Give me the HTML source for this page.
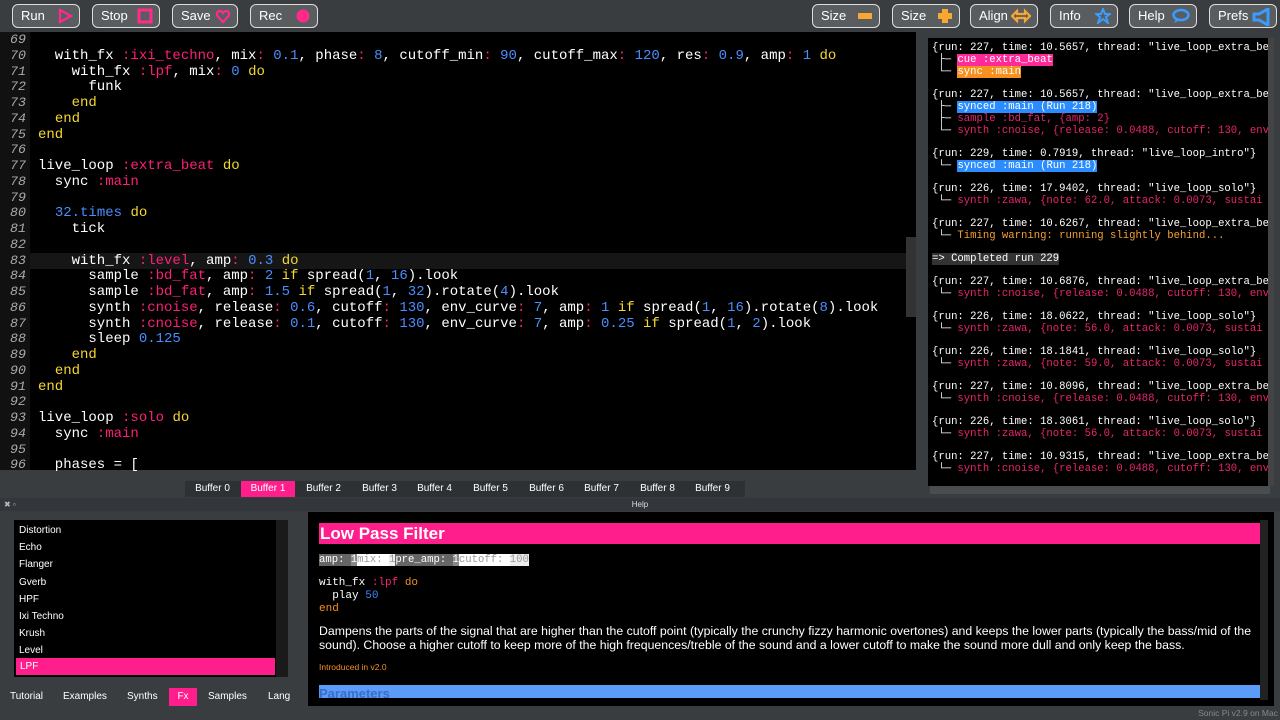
<!DOCTYPE html>
<html><head><meta charset="utf-8"><style>
*{margin:0;padding:0;box-sizing:border-box}
body{width:1280px;height:720px;background:#3a3d40;overflow:hidden;position:relative;font-family:"Liberation Sans",sans-serif}
.btn{position:absolute;top:4px;height:24px;border:1.5px solid #ddd;border-radius:6px;background:#5a5d60;color:#fff;font-size:13px;line-height:21px;padding-left:8px}
.btn i{position:absolute;right:6px;top:3px;line-height:0}
#ed{position:absolute;left:0;top:32px;width:916px;height:438px;background:#000;overflow:hidden}
#gut{position:absolute;left:0;top:0;width:30px;height:438px;background:#111}
.ln{position:absolute;left:0;width:26px;height:16px;font:italic 13.3px "Liberation Mono",monospace;color:#aaa;text-align:right}
.cl{position:absolute;left:38px;height:16px;font:14px "Liberation Mono",monospace;color:#fff;white-space:pre;line-height:16px}
.k{color:#f5d830}.s{color:#ff1e78}.n{color:#4a8dff}.c{color:#ff1e78}
#log{position:absolute;left:928px;top:38px;width:340px;height:448px;background:#000;overflow:hidden;font:10.6px "Liberation Mono",monospace;color:#fff;white-space:pre}
#log div{position:absolute;left:4px;line-height:12px}
.p{color:#e8246e}.o{color:#f7a030}
.tab{position:absolute;top:481px;height:16px;font-size:10px;color:#fff;line-height:16px;text-align:center}
</style></head><body>
<div class="btn" style="left:12px;width:68px">Run<i><svg width="16" height="16"><path d="M3 2 L14 8 L3 14Z" fill="none" stroke="#ff2a8a" stroke-width="2.2"/></svg></i></div>
<div class="btn" style="left:92px;width:68px">Stop<i><svg width="16" height="16"><rect x="2" y="2" width="12" height="12" fill="none" stroke="#ff2a8a" stroke-width="3"/></svg></i></div>
<div class="btn" style="left:172px;width:66px">Save<i><svg width="16" height="16"><path d="M8 14 L2.5 8 C0 4.5 5 0.5 8 5 C11 0.5 16 4.5 13.5 8Z" fill="none" stroke="#ff2a8a" stroke-width="2.2"/></svg></i></div>
<div class="btn" style="left:250px;width:68px">Rec<i><svg width="16" height="16"><circle cx="8" cy="8" r="6.5" fill="#ff2a8a"/></svg></i></div>

<div class="btn" style="left:812px;width:68px">Size<i><svg width="16" height="16"><rect x="1" y="5" width="14" height="6" fill="#f8a830"/></svg></i></div>
<div class="btn" style="left:892px;width:68px">Size<i><svg width="16" height="16"><path d="M5 1h6v4h4v6h-4v4H5v-4H1V5h4z" fill="#f8a830"/></svg></i></div>
<div class="btn" style="left:970px;width:68px">Align<i><svg width="20" height="16"><path d="M1 8 L6 3 V6 H14 V3 L19 8 L14 13 V10 H6 V13Z" fill="none" stroke="#f8a830" stroke-width="2.2"/></svg></i></div>
<div class="btn" style="left:1050px;width:68px">Info<i><svg width="16" height="16"><path d="M8 1 L10 6 H15 L11 9 L13 15 L8 11 L3 15 L5 9 L1 6 H6Z" fill="none" stroke="#3a9cff" stroke-width="2"/></svg></i></div>
<div class="btn" style="left:1129px;width:68px">Help<i><svg width="18" height="16"><ellipse cx="9" cy="7" rx="7.5" ry="5" fill="none" stroke="#3a9cff" stroke-width="2.5"/><path d="M4 11 L2 15 L8 12" fill="#3a9cff"/></svg></i></div>
<div class="btn" style="left:1209px;width:68px">Prefs<i><svg width="18" height="18"><path d="M2 6 H7 L16 1 V17 L7 12 H2Z" fill="none" stroke="#3a9cff" stroke-width="3"/></svg></i></div>

<div id="ed"><div id="gut"></div>
<div style="position:absolute;left:30px;top:221px;width:886px;height:16px;background:#161616"></div>
<div style="position:absolute;left:906px;top:205px;width:10px;height:80px;background:#333"></div>
</div>
<div id="code" style="position:absolute;left:0;top:32px">
<div class="ln" style="top:0">69</div><div class="ln" style="top:15.75px">70</div><div class="ln" style="top:31.5px">71</div><div class="ln" style="top:47.25px">72</div><div class="ln" style="top:63px">73</div><div class="ln" style="top:78.75px">74</div><div class="ln" style="top:94.5px">75</div><div class="ln" style="top:110.25px">76</div><div class="ln" style="top:126px">77</div><div class="ln" style="top:141.75px">78</div><div class="ln" style="top:157.5px">79</div><div class="ln" style="top:173.25px">80</div><div class="ln" style="top:189px">81</div><div class="ln" style="top:204.75px">82</div><div class="ln" style="top:220.5px">83</div><div class="ln" style="top:236.25px">84</div><div class="ln" style="top:252px">85</div><div class="ln" style="top:267.75px">86</div><div class="ln" style="top:283.5px">87</div><div class="ln" style="top:299.25px">88</div><div class="ln" style="top:315px">89</div><div class="ln" style="top:330.75px">90</div><div class="ln" style="top:346.5px">91</div><div class="ln" style="top:362.25px">92</div><div class="ln" style="top:378px">93</div><div class="ln" style="top:393.75px">94</div><div class="ln" style="top:409.5px">95</div><div class="ln" style="top:425.25px">96</div>
<div class="cl" style="top:15.75px">  with_fx <span class="s">:ixi_techno</span>, mix<span class="c">:</span> <span class="n">0.1</span>, phase<span class="c">:</span> <span class="n">8</span>, cutoff_min<span class="c">:</span> <span class="n">90</span>, cutoff_max<span class="c">:</span> <span class="n">120</span>, res<span class="c">:</span> <span class="n">0.9</span>, amp<span class="c">:</span> <span class="n">1</span> <span class="k">do</span></div>
<div class="cl" style="top:31.5px">    with_fx <span class="s">:lpf</span>, mix<span class="c">:</span> <span class="n">0</span> <span class="k">do</span></div>
<div class="cl" style="top:47.25px">      funk</div>
<div class="cl" style="top:63px">    <span class="k">end</span></div>
<div class="cl" style="top:78.75px">  <span class="k">end</span></div>
<div class="cl" style="top:94.5px"><span class="k">end</span></div>
<div class="cl" style="top:126px">live_loop <span class="s">:extra_beat</span> <span class="k">do</span></div>
<div class="cl" style="top:141.75px">  sync <span class="s">:main</span></div>
<div class="cl" style="top:173.25px">  <span class="n">32.times</span> <span class="k">do</span></div>
<div class="cl" style="top:189px">    tick</div>
<div class="cl" style="top:220.5px">    with_fx <span class="s">:level</span>, amp<span class="c">:</span> <span class="n">0.3</span> <span class="k">do</span></div>
<div class="cl" style="top:236.25px">      sample <span class="s">:bd_fat</span>, amp<span class="c">:</span> <span class="n">2</span> <span class="k">if</span> spread(<span class="n">1</span>, <span class="n">16</span>).look</div>
<div class="cl" style="top:252px">      sample <span class="s">:bd_fat</span>, amp<span class="c">:</span> <span class="n">1.5</span> <span class="k">if</span> spread(<span class="n">1</span>, <span class="n">32</span>).rotate(<span class="n">4</span>).look</div>
<div class="cl" style="top:267.75px">      synth <span class="s">:cnoise</span>, release<span class="c">:</span> <span class="n">0.6</span>, cutoff<span class="c">:</span> <span class="n">130</span>, env_curve<span class="c">:</span> <span class="n">7</span>, amp<span class="c">:</span> <span class="n">1</span> <span class="k">if</span> spread(<span class="n">1</span>, <span class="n">16</span>).rotate(<span class="n">8</span>).look</div>
<div class="cl" style="top:283.5px">      synth <span class="s">:cnoise</span>, release<span class="c">:</span> <span class="n">0.1</span>, cutoff<span class="c">:</span> <span class="n">130</span>, env_curve<span class="c">:</span> <span class="n">7</span>, amp<span class="c">:</span> <span class="n">0.25</span> <span class="k">if</span> spread(<span class="n">1</span>, <span class="n">2</span>).look</div>
<div class="cl" style="top:299.25px">      sleep <span class="n">0.125</span></div>
<div class="cl" style="top:315px">    <span class="k">end</span></div>
<div class="cl" style="top:330.75px">  <span class="k">end</span></div>
<div class="cl" style="top:346.5px"><span class="k">end</span></div>
<div class="cl" style="top:378px">live_loop <span class="s">:solo</span> <span class="k">do</span></div>
<div class="cl" style="top:393.75px">  sync <span class="s">:main</span></div>
<div class="cl" style="top:425.25px">  phases = [</div>
</div>

<div id="log">
<div style="top:4px">{run: 227, time: 10.5657, thread: "live_loop_extra_be</div>
<div style="top:16px"> ├─ <span style="background:#ff2a9a;color:#fff">cue :extra_beat</span></div>
<div style="top:28px"> └─ <span style="background:#f7901e;color:#fff">sync :main</span></div>
<div style="top:51px">{run: 227, time: 10.5657, thread: "live_loop_extra_be</div>
<div style="top:63px"> ├─ <span style="background:#2a8cff;color:#fff">synced :main (Run 218)</span></div>
<div style="top:75px" class="p"> <span style="color:#fff">├─</span> sample :bd_fat, {amp: 2}</div>
<div style="top:87px" class="p"> <span style="color:#fff">└─</span> synth :cnoise, {release: 0.0488, cutoff: 130, env</div>
<div style="top:110px">{run: 229, time: 0.7919, thread: "live_loop_intro"}</div>
<div style="top:122px"> └─ <span style="background:#2a8cff;color:#fff">synced :main (Run 218)</span></div>
<div style="top:145px">{run: 226, time: 17.9402, thread: "live_loop_solo"}</div>
<div style="top:157px" class="p"> <span style="color:#fff">└─</span> synth :zawa, {note: 62.0, attack: 0.0073, sustai</div>
<div style="top:180px">{run: 227, time: 10.6267, thread: "live_loop_extra_be</div>
<div style="top:192px" class="o"> <span style="color:#fff">└─</span> Timing warning: running slightly behind...</div>
<div style="top:215px"><span style="background:#333">=&gt; Completed run 229</span></div>
<div style="top:238px">{run: 227, time: 10.6876, thread: "live_loop_extra_be</div>
<div style="top:250px" class="p"> <span style="color:#fff">└─</span> synth :cnoise, {release: 0.0488, cutoff: 130, env</div>
<div style="top:273px">{run: 226, time: 18.0622, thread: "live_loop_solo"}</div>
<div style="top:285px" class="p"> <span style="color:#fff">└─</span> synth :zawa, {note: 56.0, attack: 0.0073, sustai</div>
<div style="top:308px">{run: 226, time: 18.1841, thread: "live_loop_solo"}</div>
<div style="top:320px" class="p"> <span style="color:#fff">└─</span> synth :zawa, {note: 59.0, attack: 0.0073, sustai</div>
<div style="top:343px">{run: 227, time: 10.8096, thread: "live_loop_extra_be</div>
<div style="top:355px" class="p"> <span style="color:#fff">└─</span> synth :cnoise, {release: 0.0488, cutoff: 130, env</div>
<div style="top:378px">{run: 226, time: 18.3061, thread: "live_loop_solo"}</div>
<div style="top:390px" class="p"> <span style="color:#fff">└─</span> synth :zawa, {note: 56.0, attack: 0.0073, sustai</div>
<div style="top:413px">{run: 227, time: 10.9315, thread: "live_loop_extra_be</div>
<div style="top:425px" class="p"> <span style="color:#fff">└─</span> synth :cnoise, {release: 0.0488, cutoff: 130, env</div>
</div>
<div style="position:absolute;left:1268px;top:38px;width:6px;height:448px;background:#444"></div>
<div style="position:absolute;left:930px;top:486px;width:340px;height:8px;background:#4a4d50"></div>

<div style="position:absolute;left:185px;top:481px;width:560px;height:16px;background:#2e3134"></div>
<div class="tab" style="left:185px;width:55px">Buffer 0</div>
<div class="tab" style="left:241px;width:54px;background:#ff1e8c">Buffer 1</div>
<div class="tab" style="left:296px;width:55px">Buffer 2</div>
<div class="tab" style="left:352px;width:55px">Buffer 3</div>
<div class="tab" style="left:407px;width:55px">Buffer 4</div>
<div class="tab" style="left:463px;width:55px">Buffer 5</div>
<div class="tab" style="left:519px;width:55px">Buffer 6</div>
<div class="tab" style="left:574px;width:55px">Buffer 7</div>
<div class="tab" style="left:630px;width:55px">Buffer 8</div>
<div class="tab" style="left:685px;width:55px">Buffer 9</div>

<div style="position:absolute;left:0;top:498px;width:1280px;height:13px;background:#33363a;font-size:8px;color:#ddd;text-align:center;line-height:13px">Help</div>
<div style="position:absolute;left:4px;top:500px;font-size:8px;color:#bbb">✖ ▫</div>

<div style="position:absolute;left:14px;top:520px;width:274px;height:157px;background:#000;font-size:10px;color:#fff">
<div style="position:absolute;left:5px;top:2px;line-height:17.2px">Distortion<br>Echo<br>Flanger<br>Gverb<br>HPF<br>Ixi Techno<br>Krush<br>Level</div>
<div style="position:absolute;left:2px;top:138px;width:259px;height:17px;background:#ff1e8c;line-height:17px;padding-left:4px">LPF</div>
<div style="position:absolute;left:262px;top:0;width:12px;height:157px;background:#1a1a1a"></div>
</div>
<div style="position:absolute;left:0;top:688px;width:300px;height:18px;font-size:10px;color:#fff;line-height:18px">
<span style="position:absolute;left:10px">Tutorial</span><span style="position:absolute;left:63px">Examples</span><span style="position:absolute;left:127px">Synths</span><span style="position:absolute;left:169px;width:28px;background:#ff1e8c;text-align:center">Fx</span><span style="position:absolute;left:208px">Samples</span><span style="position:absolute;left:268px">Lang</span></div>

<div style="position:absolute;left:308px;top:512px;width:966px;height:194px;background:#000;overflow:hidden">
<div style="position:absolute;left:11px;top:11px;width:941px;height:21px;background:#ff1e8c;color:#fff;font-weight:bold;font-size:17px;line-height:21px;padding-left:1px">Low Pass Filter</div>
<div style="position:absolute;left:11px;top:42px;font:10.6px 'Liberation Mono',monospace;line-height:13px;white-space:pre"><span style="background:#666;color:#fff">amp: </span><span style="background:#888;color:#fff">1</span><span style="background:#fff;color:#999">mix: </span><span style="background:#eee;color:#999">1</span><span style="background:#666;color:#fff">pre_amp: </span><span style="background:#888;color:#fff">1</span><span style="background:#fff;color:#999">cutoff: </span><span style="background:#eee;color:#999">100</span></div>
<div style="position:absolute;left:11px;top:65px;font:11px 'Liberation Mono',monospace;color:#fff;white-space:pre;line-height:13px">with_fx <span style="color:#ff1e78">:lpf</span> <span style="color:#f7901e">do</span>
  play <span style="color:#3a8cff">50</span>
<span style="color:#f7901e">end</span></div>
<div style="position:absolute;left:11px;top:112px;width:942px;font-size:12.3px;color:#fff;line-height:14px">Dampens the parts of the signal that are higher than the cutoff point (typically the crunchy fizzy harmonic overtones) and keeps the lower parts (typically the bass/mid of the sound). Choose a higher cutoff to keep more of the high frequences/treble of the sound and a lower cutoff to make the sound more dull and only keep the bass.</div>
<div style="position:absolute;left:11px;top:150px;font-size:8.5px;color:#f7901e">Introduced in v2.0</div>
<div style="position:absolute;left:11px;top:173px;width:941px;height:13px;background:#5a9cf8;color:#3a6cc8;font-weight:bold;font-size:13px;line-height:18px;overflow:hidden">Parameters</div>
<div style="position:absolute;left:952px;top:8px;width:8px;height:180px;background:#222"></div>
</div>
<div style="position:absolute;right:2px;top:708px;font-size:8.5px;color:#888">Sonic Pi v2.9 on Mac</div>
</body></html>
